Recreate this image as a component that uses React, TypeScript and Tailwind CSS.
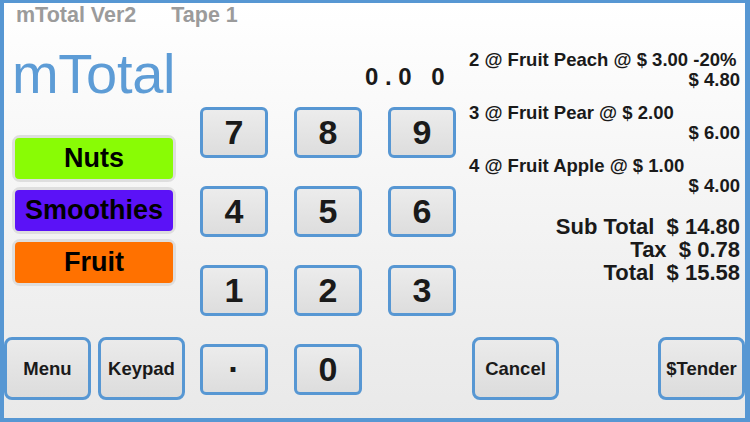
import React from "react";

const tape = [
  { line: "2 @ Fruit Peach @ $ 3.00 -20%", amount: "$ 4.80" },
  { line: "3 @ Fruit Pear @ $ 2.00", amount: "$ 6.00" },
  { line: "4 @ Fruit Apple @ $ 1.00", amount: "$ 4.00" },
];

const totals = [
  { label: "Sub Total", value: "14.80" },
  { label: "Tax", value: "0.78" },
  { label: "Total", value: "15.58" },
];

const categories = [
  { name: "Nuts", color: "bg-[#89fc05]" },
  { name: "Smoothies", color: "bg-[#5b12f7]" },
  { name: "Fruit", color: "bg-[#ff7100]" },
];

const keys = ["7", "8", "9", "4", "5", "6", "1", "2", "3", "·", "0"];

function ActionButton({ label }: { label: string }) {
  return (
    <button
      type="button"
      className="w-[87px] h-[63px] rounded-[8px] border-[3px] border-[#5797d3] bg-gradient-to-b from-[#ebebeb] to-[#dcdcdc] text-[18.5px] font-bold text-[#1a1a1a] flex items-center justify-center"
    >
      {label}
    </button>
  );
}

export default function App() {
  return (
    <div
      className="w-[750px] h-[422px] box-border border-t-[3px] border-l-[4px] border-r-[5px] border-b-[4px] border-[#5797d3] bg-gradient-to-b from-white to-[#e9e9e9] flex flex-col overflow-hidden"
      style={{ fontFamily: '"Liberation Sans", Arial, sans-serif' }}
    >
      {/* header */}
      <div className="h-[24px] leading-[24px] pl-[12px] flex gap-[35px] text-[21.5px] font-bold text-[#9b9b9b]">
        <span>mTotal Ver2</span>
        <span>Tape 1</span>
      </div>

      <div className="flex-1 flex">
        {/* left column */}
        <div className="w-[196px] flex flex-col pb-[18px]">
          <div className="mt-[19px] pl-[8px] text-[56px] leading-[56px] tracking-[-0.3px] text-[#5d9cd6]">
            mTotal
          </div>
          <div className="mt-[33px] ml-[8px] w-[164px] flex flex-col gap-[5px]">
            {categories.map((c) => (
              <div key={c.name} className="rounded-[8px] border-[3px] border-[#dedede] bg-[#e6e6e6]">
                <div
                  className={`h-[41px] rounded-[4px] ${c.color} flex items-center justify-center text-[27px] font-bold text-black`}
                >
                  {c.name}
                </div>
              </div>
            ))}
          </div>
          <div className="mt-auto flex gap-[7px]">
            <ActionButton label="Menu" />
            <ActionButton label="Keypad" />
          </div>
        </div>

        {/* keypad column */}
        <div className="w-[256px] flex flex-col">
          <div className="h-[80px] pt-[36px] pr-[5px] text-right text-[24px] leading-[28px] font-bold tracking-[6.5px] text-[#1a1a1a]">
            0.0 0
          </div>
          <div className="grid grid-cols-[68px_68px_68px] gap-x-[26px] gap-y-[28px]">
            {keys.map((k) => (
              <button
                key={k}
                type="button"
                className="h-[51px] rounded-[6px] border-[3px] border-[#5797d3] bg-gradient-to-b from-[#ececec] to-[#dddddd] flex items-center justify-center text-[34px] font-bold text-[#1a1a1a]"
              >
                {k}
              </button>
            ))}
          </div>
        </div>

        {/* tape column */}
        <div className="flex-1 flex flex-col pb-[18px]">
          <div className="mt-[23px] pl-[13px] pr-[5px] text-[18.5px] leading-[20px] font-bold text-[#1a1a1a] flex flex-col gap-[13px]">
            {tape.map((t) => (
              <div key={t.line}>
                <div>{t.line}</div>
                <div className="text-right">{t.amount}</div>
              </div>
            ))}
          </div>
          <div className="mt-[19px] pr-[5px] text-[22px] leading-[23px] font-bold text-[#1a1a1a] text-right whitespace-pre">
            {totals.map((t) => (
              <div key={t.label}>{`${t.label}  $ ${t.value}`}</div>
            ))}
          </div>
          <div className="mt-auto pl-[16px] flex justify-between">
            <ActionButton label="Cancel" />
            <ActionButton label="$Tender" />
          </div>
        </div>
      </div>
    </div>
  );
}
